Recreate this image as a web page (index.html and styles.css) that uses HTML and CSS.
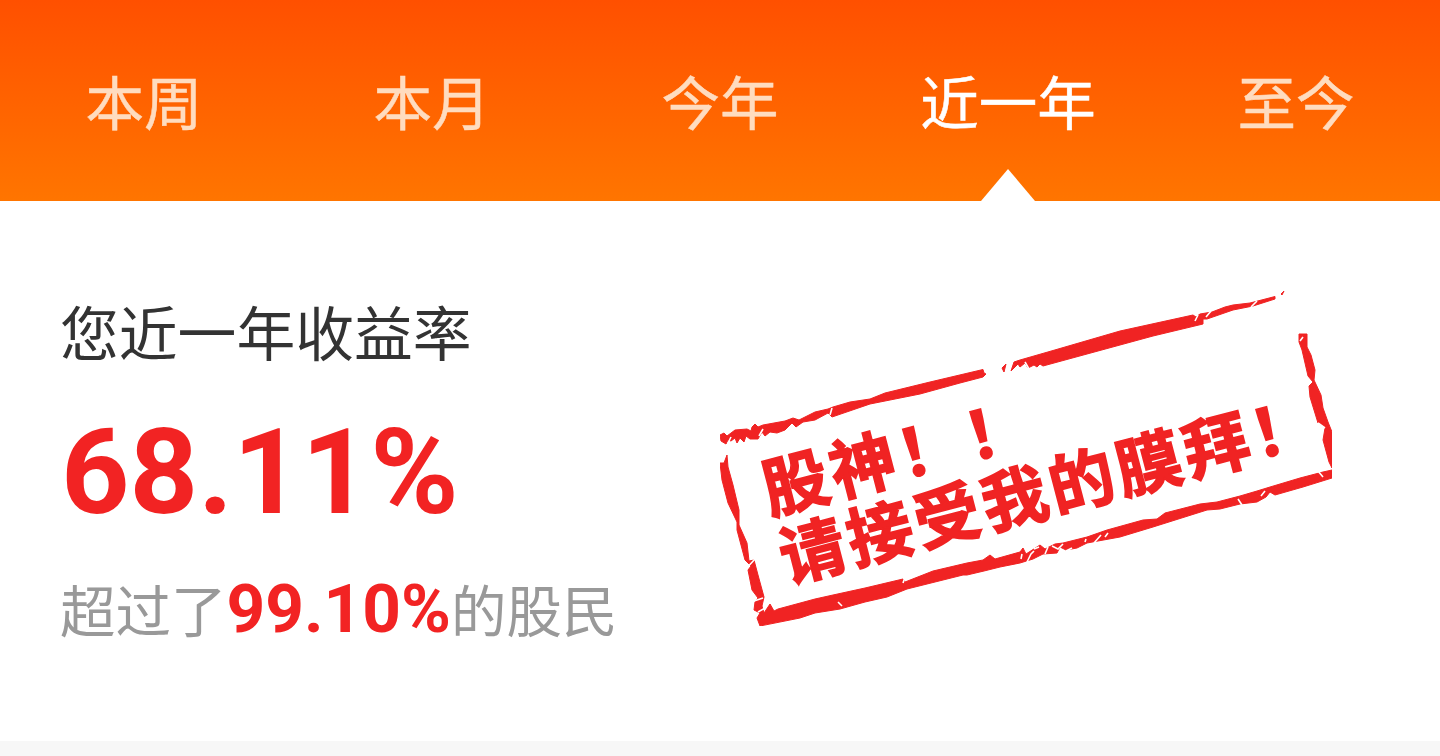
FILE: index.html
```html
<!DOCTYPE html>
<html lang="zh-CN">
<head>
    <meta charset="UTF-8">
    <meta name="viewport" content="width=device-width, initial-scale=1.0">
    <title>收益率</title>
    <link rel="stylesheet" href="styles.css">
</head>
<body>
    <nav class="tabs">
        <a class="tab">本周</a>
        <a class="tab">本月</a>
        <a class="tab">今年</a>
        <a class="tab active">近一年</a>
        <a class="tab">至今</a>
    </nav>

    <div class="card">
        <div class="summary">
            <div class="title">您近一年收益率</div>
            <div class="rate">68.11%</div>
            <div class="rank">超过了<span class="rank-value">99.10%</span>的股民</div>
        </div>

        <svg class="stamp" viewBox="720 290 612 336">
            <!-- worn frame -->
            <g class="stamp-ink">
                <path d="M720 435L724 433 727 436 735 430 747 429 751 431 752 427 755 424 758 427 763 425 785 421 793 418 799 420 815 412 828 409 833 407 850 402 870 399 885 393 930 382 983 369.5 984 373 986 374 983 377 960 383 920 394 870 404 832 417 828 413 815 420 803 422 796 427 792 423 785 430 777 433 770 432 765 436 762 432 758 439 750 439 746 436 744 442 740 438 737 443 735 438 731 441 728 440 726 444 721 441Z"/>
                <path d="M1002 368L1006 364 1004 372ZM1011 371L1014 362 1020 360 1053 350.500 1120 331 1193 315 1196 317 1200 314 1212 312 1225 307 1233 305 1250 303 1275 296.500 1275 299 1253 306 1233 310 1207 319 1203 319 1203 324 1153 336 1087 354 1043 366 1040 364 1037 367 1034 365 1028 368 1025 363 1020 367 1018 364ZM1281 294L1284 291 1282 295Z"/>
                <path d="M1299 334L1307 334 1307 347 1311 355 1315 370 1314 380 1321 395 1323 408 1328 422 1332 432 1332 468 1329 462 1323 440 1325 428 1318 423 1310 397 1309 386 1313 382 1308 376 1302 350 1299 342Z"/>
                <path d="M727 455L728 467 733 485 739 510 739 525 747 543 749 561 754 560 758 575 764 597 762 606 764 613 770 604 774 611 778 609 815 599 833 595 865 588 903 579 905 582 933 571 967 563 983 560 990 555 995 559 1020 552 1023 548 1026 554 1040 545 1045 549 1055 544 1063 543 1087 537 1107 530 1143 520 1157 519 1165 513 1200 504 1217 502 1240 496 1257 491 1270 487 1300 478 1323 472 1332 470 1332 478 1303 487 1275 495 1270 492 1266 497 1257 502 1240 504 1220 509 1207 510 1153 527 1120 537 1087 543 1077 548 1066 550 1060 547 1057 553 1043 554 1033 559 1020 563 1000 567 984 571 967 575 963 575 907 589 887 597 865 602 840 609 815 613 800 618 760 626 757 618 760 613 754 610 755 602 758 598 752 590 748 570 751 566 745 560 741 545 737 530 737 522 728 503 722 480 720 463 724 463Z"/>
            </g>
            <!-- scratches -->
            <g class="stamp-scratch">
                <path d="M1195 321L1198 315M1206 317L1211 311M1251 307L1257 301M1300 341L1303 337M1318 423L1325 428M744 571L755 559M754 601L763 598M758 612L765 608M838 602L842 606M903 583L905 577M1021 559L1022 554M1027 562L1031 554 1034 551M1034 549L1039 547M1045 554L1048 547M1052 546L1058 549 1063 544M1066 551L1072 548M1085 542L1086 539M1094 543L1101 535M1105 537L1108 533M1238 499L1242 505M1261 496L1265 491M1318 471L1323 477M759 436L763 429M830 415L832 408M1025 362L1029 369M728 443L731 437"/>
            </g>
            <text class="stamp-text" transform="translate(770 514.500) rotate(-14.600)">股神！！</text>
            <text class="stamp-text" transform="translate(787 582.500) rotate(-14.600)">请接受我的膜拜！</text>
        </svg>
    </div>
</body>
</html>
```
FILE: styles.css
```css
body {
    margin: 0;
    height: 756px;
    overflow: hidden;
    display: flex;
    flex-direction: column;
    background-color: #f7f7f7;
    font-family: "Noto Sans CJK SC", sans-serif;
}
.tabs {
    display: flex;
    height: 201px;
    background: linear-gradient(#ff5000, #ff7500);
}
.tab {
    position: relative;
    flex: 1;
    padding-top: 58px;
    font-size: 58.5px;
    line-height: 84px;
    text-align: center;
    color: #ffdcbf;
    -webkit-text-stroke: 0.5px;
}
.tab.active {
    color: #fff;
}
.tab.active::after {
    content: "";
    position: absolute;
    bottom: 0;
    left: 50%;
    margin-left: -27px;
    border: solid transparent;
    border-width: 0 27px 32px;
    border-bottom-color: #fff;
}
.card {
    display: flex;
    height: 540px;
    background-color: #fff;
}
.summary {
    width: 660px;
    padding: 87px 0 0 60px;
    white-space: nowrap;
}
.title {
    font-size: 58.8px;
    line-height: 86px;
    color: #333;
}
.rate {
    margin-top: 28px;
    padding-left: 1px;
    font-family: Roboto, sans-serif;
    font-size: 119.6px;
    font-weight: 700;
    line-height: 140px;
    color: #f22323;
}
.rank {
    margin-top: 21px;
    font-size: 55.5px;
    line-height: 90px;
    color: #999;
}
.rank-value {
    font-family: Roboto, sans-serif;
    font-size: 67.5px;
    font-weight: 700;
    line-height: 1;
    color: #f22323;
}
.stamp {
    width: 612px;
    height: 336px;
    margin-top: 89px;
}
.stamp-ink {
    fill: #f02323;
    stroke: #f02323;
    stroke-width: 1;
}
.stamp-scratch {
    fill: none;
    stroke: #fff;
    stroke-width: 1.6;
}
.stamp-text {
    fill: #f02323;
    stroke: #f02323;
    stroke-width: 1.6;
    font-size: 65.5px;
    font-weight: 700;
    letter-spacing: 4px;
}
```
